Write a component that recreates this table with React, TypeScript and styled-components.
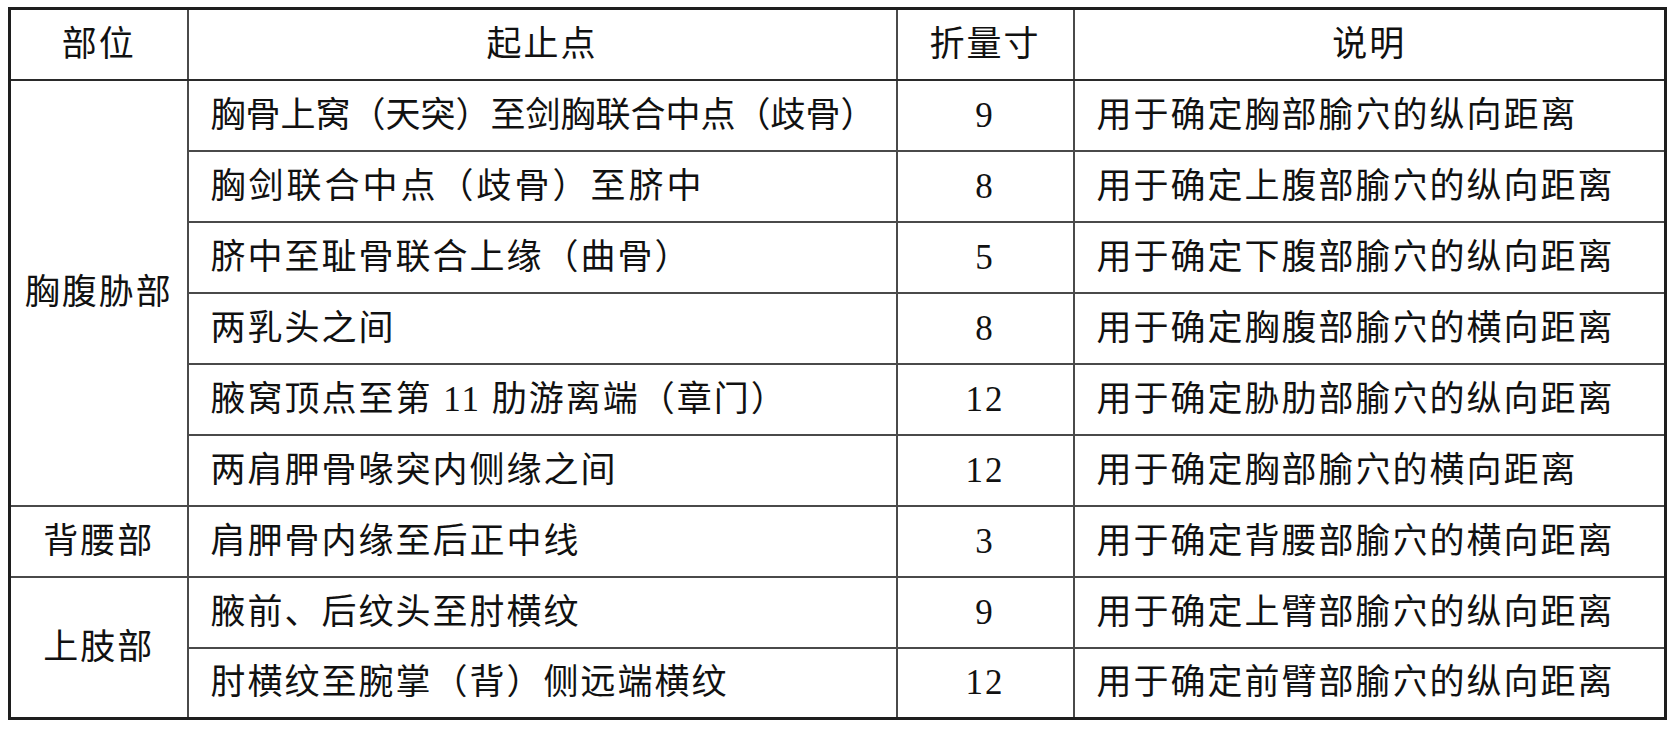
import React from "react";
import styled, { createGlobalStyle } from "styled-components";

// Styles
const GlobalStyle = createGlobalStyle`
  html, body {
    margin: 0;
    padding: 0;
    background: #ffffff;
  }
`;

const Page = styled.div`
  padding: 7px 0 0 8px;
`;

const Table = styled.table`
  width: 1656px;
  border-collapse: collapse;
  table-layout: fixed;
  border: 3px solid #1e1e1e;
  font-family: "Liberation Serif", "Noto Sans CJK SC", serif;
  font-size: 35px;
  letter-spacing: 2px;
  color: #111111;
`;

const Row = styled.tr`
  height: 71px;
`;

const Cell = styled.td<{ $align?: "left" | "center"; $spacing?: number }>`
  border: 2px solid #4a4a4a;
  padding: ${(props) => (props.$align === "left" ? "0 0 0 22px" : "0")};
  text-align: ${(props) => props.$align || "center"};
  letter-spacing: ${(props) => (props.$spacing ?? 2) + "px"};
  vertical-align: middle;
  white-space: nowrap;
  line-height: 1;
`;

const HeadCell = styled.th`
  border: 2px solid #4a4a4a;
  border-bottom-color: #2a2a2a;
  font-weight: normal;
  text-align: center;
  vertical-align: middle;
  line-height: 1;
`;

// Data
type Item = { range: string; cun: string; note: string; spacing?: number };
type Group = { part: string; items: Item[] };

const groups: Group[] = [
  {
    part: "胸腹胁部",
    items: [
      { range: "胸骨上窝（天突）至剑胸联合中点（歧骨）", cun: "9", note: "用于确定胸部腧穴的纵向距离", spacing: 0 },
      { range: "胸剑联合中点（歧骨）至脐中", cun: "8", note: "用于确定上腹部腧穴的纵向距离", spacing: 3 },
      { range: "脐中至耻骨联合上缘（曲骨）", cun: "5", note: "用于确定下腹部腧穴的纵向距离" },
      { range: "两乳头之间", cun: "8", note: "用于确定胸腹部腧穴的横向距离" },
      { range: "腋窝顶点至第 11 肋游离端（章门）", cun: "12", note: "用于确定胁肋部腧穴的纵向距离" },
      { range: "两肩胛骨喙突内侧缘之间", cun: "12", note: "用于确定胸部腧穴的横向距离" },
    ],
  },
  {
    part: "背腰部",
    items: [
      { range: "肩胛骨内缘至后正中线", cun: "3", note: "用于确定背腰部腧穴的横向距离" },
    ],
  },
  {
    part: "上肢部",
    items: [
      { range: "腋前、后纹头至肘横纹", cun: "9", note: "用于确定上臂部腧穴的纵向距离" },
      { range: "肘横纹至腕掌（背）侧远端横纹", cun: "12", note: "用于确定前臂部腧穴的纵向距离" },
    ],
  },
];

// Component
const App: React.FC = () => {
  return (
    <Page>
      <GlobalStyle />
      <Table>
        <colgroup>
          <col style={{ width: "178px" }} />
          <col style={{ width: "709px" }} />
          <col style={{ width: "177px" }} />
          <col style={{ width: "592px" }} />
        </colgroup>
        <thead>
          <Row>
            <HeadCell>部位</HeadCell>
            <HeadCell>起止点</HeadCell>
            <HeadCell>折量寸</HeadCell>
            <HeadCell>说明</HeadCell>
          </Row>
        </thead>
        <tbody>
          {groups.map((group) =>
            group.items.map((item, i) => (
              <Row key={group.part + i}>
                {i === 0 && <Cell rowSpan={group.items.length}>{group.part}</Cell>}
                <Cell $align="left" $spacing={item.spacing}>
                  {item.range}
                </Cell>
                <Cell>{item.cun}</Cell>
                <Cell $align="left">{item.note}</Cell>
              </Row>
            ))
          )}
        </tbody>
      </Table>
    </Page>
  );
};

export default App;
